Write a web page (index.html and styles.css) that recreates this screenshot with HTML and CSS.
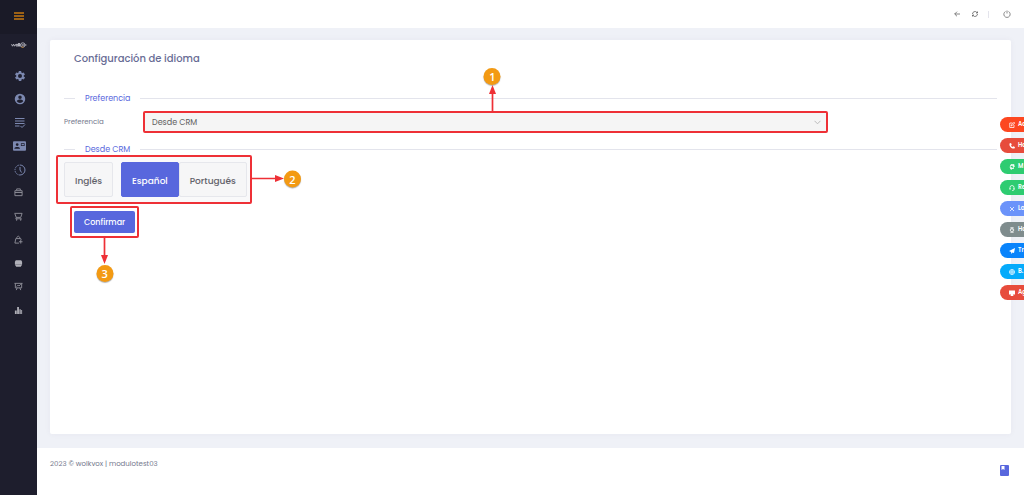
FILE: index.html
```html
<!DOCTYPE html>
<html lang="es">
<head>
<meta charset="utf-8">
<meta name="viewport" content="width=device-width, initial-scale=1">
<title>Configuración de idioma</title>
<link rel="stylesheet" href="styles.css">
</head>
<body>
<div class="app">
  <aside class="sidebar">
    <button class="menu-toggle" aria-label="Menú"><svg width="10" height="8" viewBox="0 0 10 8"><path d="M0 1h10M0 4h10M0 7h10" stroke="#c87a12" stroke-width="1.3"/></svg></button>
    <div class="logo" role="img" aria-label="wolkvox"><svg width="16" height="6" viewBox="0 0 16 6" fill="none" stroke="#c9c9d2"><path d="M.5 2.200l1 2 1-2 1 2 1-2M7.500 1v3.500M8.500 1v3.500M9.500 2.500L8.800 3.300l.9 1.200M13.500 3h2" stroke-width=".8"/><circle cx="6" cy="3.200" r="1"/><circle cx="11.800" cy="3" r="2.200" stroke-width=".8"/><path d="M10.800 2l2 2m0-2l-2 2" stroke-width=".6"/><path d="M10.500 5.200h2" stroke="#c87a12" stroke-width=".8"/></svg></div>
    <nav class="side-nav" aria-label="Principal">
      <a href="#" aria-label="Ajustes"><svg class="i-lg" viewBox="0 0 24 24"><path fill="currentColor" fill-rule="evenodd" d="M19.400 13a7.800 7.800 0 000-2l2.100-1.600a.5.5 0 00.1-.7l-2-3.400a.5.5 0 00-.6-.2l-2.500 1a7.300 7.300 0 00-1.700-1l-.4-2.600A.5.5 0 0014 2h-4a.5.5 0 00-.5.400l-.4 2.700a7.300 7.300 0 00-1.700 1l-2.500-1a.5.5 0 00-.6.200l-2 3.400a.5.5 0 00.1.700L4.600 11a7.800 7.800 0 000 2l-2.100 1.600a.5.5 0 00-.1.700l2 3.400c.1.200.4.300.6.200l2.500-1c.5.400 1.100.7 1.700 1l.4 2.700c0 .2.200.4.500.4h4c.2 0 .5-.2.500-.4l.4-2.700c.6-.3 1.200-.6 1.700-1l2.500 1c.2.100.5 0 .6-.2l2-3.400a.5.5 0 00-.1-.7zM12 16a4 4 0 110-8 4 4 0 010 8z"/></svg></a>
      <a href="#" aria-label="Usuario"><svg class="i-lg" viewBox="0 0 24 24"><path fill="currentColor" fill-rule="evenodd" d="M12 1.500a10.500 10.500 0 100 21 10.500 10.500 0 000-21zM12 5a3.500 3.500 0 110 7 3.500 3.500 0 010-7zm0 15a8 8 0 01-6.500-3.500c0-2.200 4.300-3.400 6.500-3.400s6.500 1.200 6.500 3.400A8 8 0 0112 20z"/></svg></a>
      <a href="#" aria-label="Lista"><svg class="i-lg" viewBox="0 0 24 24" fill="none" stroke="currentColor" stroke-width="2"><path d="M2 3h19M2 8h19M2 13h19M2 18h9M13 18l3 3 6-6"/></svg></a>
      <a href="#" aria-label="Contactos"><svg class="i-xl" viewBox="0 0 28 20"><path fill="currentColor" fill-rule="evenodd" d="M2 0h24a2 2 0 012 2v16a2 2 0 01-2 2H2a2 2 0 01-2-2V2a2 2 0 012-2zm7 4a3 3 0 100 6 3 3 0 000-6zm-6 12h12v-1c0-2-4-3-6-3s-6 1-6 3zM17 4v6h8V4zm1.500 1.500h5v3h-5z"/></svg></a>
      <a href="#" aria-label="Historial"><svg class="i-lg" viewBox="0 0 24 24" fill="none" stroke="currentColor" stroke-width="2"><path d="M12 2a10 10 0 010 20"/><path d="M12 22a10 10 0 010-20" stroke-dasharray="3 2"/><path d="M12 6v6l3 5"/></svg></a>
      <a href="#" class="gray" aria-label="Maletín"><svg class="i-sm" viewBox="0 0 20 20" fill="none" stroke="currentColor" stroke-width="2"><path d="M2 6h16v11H2zM2 10h16M6 5V2h8v3"/></svg></a>
      <a href="#" class="gray" aria-label="Carrito"><svg class="i-sm" viewBox="0 0 20 20" fill="none" stroke="currentColor" stroke-width="2"><path d="M1 3h17l-3 9H5L2 4M5 12l-1 3h13"/><circle cx="6" cy="17.500" r="1"/><circle cx="15" cy="17.500" r="1"/></svg></a>
      <a href="#" class="gray" aria-label="Bolsa"><svg class="i-sm" viewBox="0 0 20 20" fill="none" stroke="currentColor" stroke-width="2"><path d="M11 18H2L4 8h11l1 3M6 8c0-7 7-7 7 0M15 11v8M11 15h8"/></svg></a>
      <a href="#" class="light" aria-label="Mensajes"><svg class="i-sm" viewBox="0 0 20 20" fill="currentColor"><path d="M4 3h12l2 3v6H2V6zM2 13h16l-3 4H5z"/></svg></a>
      <a href="#" class="gray" aria-label="Informes"><svg class="i-sm" viewBox="0 0 20 20" fill="none" stroke="currentColor" stroke-width="2"><path d="M1 3h18M3 3v10h14V3M6 10l3-3 2 2 4-4M7 13l-2 5M13 13l2 5"/></svg></a>
      <a href="#" class="light" aria-label="Estadísticas"><svg class="i-sm" viewBox="0 0 20 20" fill="currentColor"><path d="M2 10h4v8H2zM7 2h4v16H7zM12 7h3v11h-3zM16 9h2v9h-2z"/></svg></a>
    </nav>
  </aside>

  <div class="page">
    <header class="topbar">
      <button aria-label="Volver"><svg width="6" height="6" viewBox="0 0 6 6" fill="none" stroke="#666" stroke-width=".8"><path d="M6 3H.7M3 .7L.7 3 3 5.300"/></svg></button>
      <button aria-label="Actualizar"><svg width="6" height="6" viewBox="0 0 12 12" fill="none" stroke="#555" stroke-width="1.500"><path d="M1 6a5 5 0 018.500-3.500L11 4M11 1v3H8M11 6a5 5 0 01-8.500 3.500L1 8M1 11V8h3"/></svg></button>
      <span class="divider"></span>
      <button aria-label="Salir"><svg width="8" height="8" viewBox="0 0 16 16" fill="none" stroke="#666" stroke-width="1.500"><path d="M5 3a6.300 6.300 0 106 0M8 1v6"/></svg></button>
    </header>

    <main class="content">
      <section class="card">
        <h1>Configuración de idioma</h1>
        <form class="form">
          <div class="separator"><span>Preferencia</span></div>
          <div class="field">
            <label for="pref">Preferencia</label>
            <div class="select-wrap marked">
              <select id="pref"><option>Desde CRM</option></select>
              <svg class="chevron" width="7" height="5" viewBox="0 0 7 5" fill="none" stroke="#bbb"><path d="M.5.800l3 3 3-3"/></svg>
              <div class="note note-up"><span class="badge">1</span><svg width="8" height="28" viewBox="0 0 8 28"><path d="M4 28V7" stroke="#ee3036" stroke-width="1.700"/><path d="M4 0l3.500 9h-7z" fill="#ee3036"/></svg></div>
            </div>
          </div>
          <div class="separator"><span>Desde CRM</span></div>
          <div class="languages marked">
            <button type="button" class="lang first">Inglés</button>
            <button type="button" class="lang active">Español</button>
            <button type="button" class="lang">Portugués</button>
            <div class="note note-right"><svg width="34" height="8" viewBox="0 0 34 8"><path d="M0 4h27" stroke="#ee3036" stroke-width="1.700"/><path d="M34 4L25 .500v7z" fill="#ee3036"/></svg><span class="badge">2</span></div>
          </div>
          <div class="actions marked">
            <button type="submit" class="confirm">Confirmar</button>
            <div class="note note-down"><svg width="8" height="29" viewBox="0 0 8 29"><path d="M4 0v20" stroke="#ee3036" stroke-width="1.700"/><path d="M4 28L.500 19h7z" fill="#ee3036"/></svg><span class="badge">3</span></div>
          </div>
        </form>
      </section>
    </main>

    <footer class="footer">
      <span>2023 © wolkvox | modulotest03</span>
      <button class="book" aria-label="Manual"><svg width="9" height="11" viewBox="0 0 9 11"><rect width="9" height="11" rx="1" fill="#5867dd"/><path d="M1.500 1h3v4l-1.500-1-1.500 1z" fill="#fff"/></svg></button>
    </footer>
  </div>

  <div class="states">
    <button class="state orange"><svg viewBox="0 0 12 12"><path d="M7 2H1.500v9H10V6M4 8l1-2.500 5-5L11.500 2l-5 5z"/></svg>Ac</button>
    <button class="state red"><svg viewBox="0 0 12 12"><path class="solid" d="M1 1l3-1 1.500 3.500L4 5c.8 1.400 1.700 2.300 3 3l1.500-1.500L12 8l-1 3C5 12 0 7 1 1z"/></svg>Ho</button>
    <button class="state green"><svg viewBox="0 0 12 12"><path d="M4 1h6L8 5h3L4 11l1-4H2zM3 3h8M2 9h8"/></svg>M</button>
    <button class="state green"><svg viewBox="0 0 12 12"><path d="M2 9V5a4 4 0 018 0v4c0 2-2 2-4 2M2 6v3M10 6v3"/></svg>Re</button>
    <button class="state blue"><svg viewBox="0 0 12 12"><path d="M2 2l8 8M10 2l-8 8"/></svg>Lo</button>
    <button class="state gray-pill"><svg viewBox="0 0 12 12"><circle cx="6" cy="6" r="3.500"/><path d="M4 2V0h4v2M4 10v2h4v-2M6 4v2h1"/></svg>Ho</button>
    <button class="state azure"><svg viewBox="0 0 12 12"><path class="solid" d="M12 0l-2 10-3-1-2 3-1-4-4-2z"/></svg>Tr</button>
    <button class="state sky"><svg viewBox="0 0 12 12"><circle cx="6" cy="6" r="5"/><circle cx="6" cy="6" r="2"/><path d="M6 1v3M6 8v3M1 6h3M8 6h3"/></svg>B.</button>
    <button class="state red"><svg viewBox="0 0 12 12"><path class="solid" d="M0 1h12v8H8l1 3H3l1-3H0z"/></svg>Ag</button>
  </div>
</div>
</body>
</html>
```
FILE: styles.css
```css
* { box-sizing: border-box; }
body { margin: 0; font-family: Poppins, Inter, "Open Sans", sans-serif; font-size: 7px; color: #74788d; background: #eff1f7; }
button { font: inherit; border: 0; padding: 0; background: none; cursor: pointer; }
svg { display: block; flex: none; }
.app { display: flex; min-height: 100vh; position: relative; overflow: hidden; }

.sidebar { flex: none; width: 37px; background: #1e1e2d; }
.menu-toggle { display: flex; align-items: center; justify-content: center; width: 100%; height: 34px; padding-bottom: 2px; background: #1a1a27; }
.logo { display: flex; justify-content: center; padding: 8px 0 16px; }
.side-nav { display: grid; grid-auto-rows: 1fr; height: 258px; }
.side-nav a { display: flex; align-items: center; justify-content: center; padding-left: 2px; color: #7c88b0; }
.side-nav .gray { color: #92929c; padding-left: 0; }
.side-nav .light { color: #b0b0b8; padding-left: 0; }
.i-lg { width: 12px; height: 12px; }
.i-xl { width: 13px; height: 10px; }
.i-sm { width: 9px; height: 9px; }

.page { flex: 1; min-width: 0; display: flex; flex-direction: column; }
.topbar { display: flex; align-items: center; justify-content: flex-end; gap: 12px; height: 28px; padding-right: 13px; background: #fff; }
.divider { width: 1px; height: 7px; background: #e4e4ec; margin: 0 2px 0 -2px; }
.content { flex: 1; display: flex; padding: 12px 13px 14px; }
.card { flex: 1; background: #fff; border-radius: 2px; box-shadow: 0 0 6px rgba(82, 63, 105, .05); }
h1 { margin: 0; padding: 0 24px; font-size: 10px; line-height: 38px; font-weight: 500; color: #676b94; }
.form { padding: 13px 14px; }
.separator { display: flex; align-items: center; gap: 10px; height: 14px; font-size: 8px; font-weight: 400; line-height: 14px; color: #5867dd; }
.separator span { padding-top: 1px; }
.separator::before, .separator::after { content: ""; height: 1px; background: #e3e4ec; }
.separator::before { width: 11px; }
.separator::after { flex: 1; }

.marked { position: relative; border: 2px solid #ee3036; border-radius: 2px; }
.field { display: flex; align-items: center; padding: 6px 0 9px; }
.field label { flex: 0 0 79px; font-size: 7px; }
.select-wrap { flex: 0 1 685px; height: 22px; background: #f5f5f5; }
.select-wrap select { appearance: none; width: 100%; height: 100%; border: 0; padding: 0 7px; background: transparent; font: inherit; font-size: 8px; color: #606060; }
.chevron { position: absolute; right: 5px; top: 7px; }
.languages { display: flex; width: fit-content; margin: -1px 0 0 -8px; padding: 5px 3px 5px 6px; background: #f9f9fa; }
.lang { height: 35px; padding: 4px 10px 0; border: 1px solid #e6e7ec; border-radius: 2px; background: #f6f6f7; font-size: 9px; font-weight: 500; color: #62626a; }
.lang.first { margin-right: 8px; }
.lang.active { background: #5867dd; border-color: #5867dd; color: #fff; }
.actions { width: fit-content; margin: 2px 0 0 6px; padding: 3px 2px; background: #fff; }
.confirm { display: block; height: 22px; padding: 1px 10px 0; border-radius: 2px; background: #5867dd; color: #fff; font-size: 8px; font-weight: 500; }

.note { position: absolute; display: flex; align-items: center; pointer-events: none; }
.note-up { flex-direction: column; left: 51%; bottom: 100%; transform: translateX(-50%); }
.note-right { left: 100%; top: 48%; transform: translateY(-50%); }
.note-down { flex-direction: column; left: 50%; top: 100%; transform: translateX(-50%); }
.badge { display: grid; place-items: center; width: 17px; height: 17px; border-radius: 50%; background: #f39a13; color: #fff; font-family: "Open Sans", sans-serif; font-size: 11px; font-weight: 600; line-height: 17px; box-shadow: 0 1px 1px rgba(0, 0, 0, .3); }

.footer { display: flex; justify-content: space-between; align-items: flex-start; height: 47px; padding: 10px 15px 0 13px; background: #fff; font-size: 7px; line-height: 12px; }
.book { margin-top: 7px; }

.states { position: absolute; right: 0; top: 117px; width: 24px; display: grid; gap: 6px; overflow: hidden; }
.state { display: flex; align-items: center; gap: 3px; width: 60px; height: 15px; padding-left: 9px; border-radius: 8px; color: #fff; font-size: 6px; font-weight: 600; }
.state svg { width: 6px; height: 6px; fill: none; stroke: #fff; stroke-width: 1.5; }
.state .solid { fill: #fff; stroke: none; }
.orange { background: #fd4720; }
.red { background: #e74c3c; }
.green { background: #2ecc71; }
.blue { background: #6b93fa; }
.gray-pill { background: #7f8c8d; }
.azure { background: #0984fb; }
.sky { background: #05abfb; }
```
